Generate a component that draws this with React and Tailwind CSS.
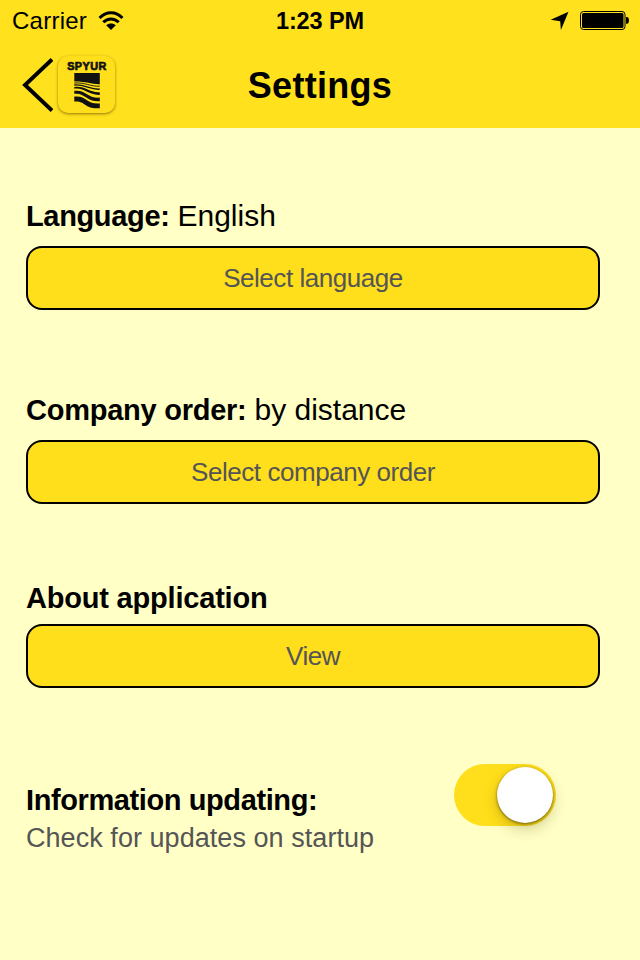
function Wifi() {
  return (
    <svg className="ml-[11px] h-[20px] w-[26px]" viewBox="0 0 26 20">
      <g fill="none" stroke="#000" strokeWidth="3">
        <path d="M1.6 6.9C8-.1 18-.1 24.4 6.9" />
        <path d="M5.3 11.3C9.6 6.8 16.4 6.8 20.7 11.3" />
      </g>
      <path d="M8.2 14.2C11.1 11.9 14.9 11.9 17.8 14.2L13 19Z" />
    </svg>
  );
}

function StatusBar() {
  return (
    <div className="grid h-10 grid-cols-3 items-start text-[24px] leading-[40px]">
      <div className="flex items-center pt-px pl-[12px]">
        <span className="tracking-[0.25px]">Carrier</span>
        <Wifi />
      </div>
      <div className="pt-px text-center text-[23.5px] font-bold tracking-[-0.1px] whitespace-nowrap">1:23 PM</div>
      <div className="flex h-10 items-center justify-end pr-[10px]">
        <svg className="mr-[11px] h-[20px] w-[19px]" viewBox="0 0 19 20">
          <path d="M18.5 1.8L10.9 20L10.2 11.2L.7 9.8Z" />
        </svg>
        <svg className="h-[20px] w-[50px]" viewBox="0 0 50 20">
          <rect x=".5" y="1.5" width="44.5" height="18" rx="3" fill="none" stroke="#000" />
          <rect x="2" y="3" width="41.5" height="15" rx="1.5" />
          <path d="M46 7H47.2Q49 7.3 49 10.4T47.2 13.8H46Z" />
        </svg>
      </div>
    </div>
  );
}

function Logo() {
  return (
    <div className="ml-[5px] flex h-[57px] w-[57px] flex-col items-center rounded-[10px] bg-[#ffde1b] shadow-[0_1px_3px_rgba(110,85,0,0.75)]">
      <svg className="h-[57px] w-[57px]" viewBox="0 0 57 57">
        <text x="9.2" y="14" textLength="39" lengthAdjust="spacing" className="font-['Liberation_Sans'] text-[10.8px] font-bold" fill="#111" stroke="#111" strokeWidth=".7">SPYUR</text>
        <path d="M16.3 17H41.8V28.2C34 28.5 27 25.2 16.3 25.5Z" fill="#111" />
        <g fill="none" stroke="#111">
          <path d="M16.3 27C27 26.2 33 30.8 41.8 30.2" strokeWidth=".9" />
          <path d="M16.3 29C27 28 32 34 41.8 33.2" strokeWidth="1.3" />
        </g>
        <g fill="#111">
          <path d="M16.3 30.9C28 29.7 31 36.8 41.8 36.2V38.9C30 39.4 27 31.5 16.3 32.7Z" />
          <path d="M16.3 34.8C28 33.3 29 42.3 41.8 41.6V45.2C28 45.8 27 36.3 16.3 37.8Z" />
          <path d="M16.3 40.6C29 39.3 27.5 48.3 41.8 47.4V52.2C26 53.5 28 44.4 16.3 45.5Z" />
        </g>
      </svg>
    </div>
  );
}

function Header() {
  return (
    <header className="h-32 bg-[#ffe11d]">
      <StatusBar />
      <div className="grid h-[88px] grid-cols-[1fr_auto_1fr] items-center">
        <div className="flex items-center pt-px pl-[22px]">
          <svg className="h-[56px] w-[31px]" viewBox="0 0 31 56">
            <path d="M30 2.5L3 28L30 53.5" fill="none" stroke="#000" strokeWidth="3.9" />
          </svg>
          <Logo />
        </div>
        <h1 className="pt-[3px] text-[36px] leading-[44px] font-bold tracking-[0.3px]">Settings</h1>
      </div>
    </header>
  );
}

function Action({ children }) {
  return (
    <button className="flex h-16 w-[574px] items-center justify-center rounded-[16px] border-2 border-black bg-[#ffde1b] text-[26px] tracking-[-0.45px] text-[#555]">
      {children}
    </button>
  );
}

export default function App() {
  return (
    <div className="h-[960px] w-[640px] overflow-hidden bg-[#ffffc6] font-['Liberation_Sans',Arial,sans-serif] text-black">
      <Header />
      <main className="px-[26px]">
        <section className="pt-[68px]">
          <div className="flex h-[50px] items-start text-[30px] leading-[40px]">
            <b className="text-[29px] tracking-[-0.35px]">Language:</b>
            <span className="ml-[8px]">English</span>
          </div>
          <Action>Select language</Action>
        </section>
        <section className="pt-[80px]">
          <div className="flex h-[50px] items-start text-[30px] leading-[40px]">
            <b className="text-[29px] tracking-[-0.25px]">Company order:</b>
            <span className="ml-[8px]">by distance</span>
          </div>
          <Action>Select company order</Action>
        </section>
        <section className="pt-[74px]">
          <div className="h-[46px] text-[29px] leading-[40px] font-bold tracking-[-0.2px]">About application</div>
          <Action>View</Action>
        </section>
        <section className="flex justify-between pt-[76px] pr-[58px]">
          <div className="pt-[16px]">
            <div className="text-[29px] leading-[40px] font-bold tracking-[-0.4px]">Information updating:</div>
            <div className="text-[27px] leading-[36px] tracking-[0.05px] text-[#555]">Check for updates on startup</div>
          </div>
          <div className="flex h-[62px] w-[102px] items-center justify-end rounded-full bg-[#ffde1b] pr-[3px]">
            <div className="h-[56px] w-[56px] rounded-full bg-white shadow-[0_1px_3px_rgba(70,60,0,0.75),0_6px_14px_rgba(90,80,0,0.28)]" />
          </div>
        </section>
      </main>
    </div>
  );
}
